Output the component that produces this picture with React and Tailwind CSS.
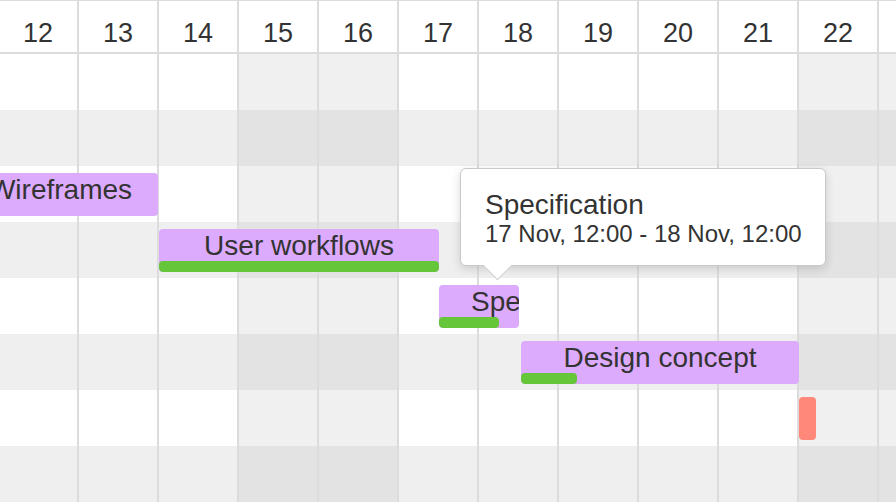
import React from 'react';

const days = [12, 13, 14, 15, 16, 17, 18, 19, 20, 21, 22, 23];
const weekend = [15, 16, 22, 23];

// bars per row, x in px from the row's left edge
const rows = [
  [],
  [],
  [{ label: 'Wireframes', left: -36, width: 195 }],
  [{ label: 'User workflows', left: 160, width: 280, progress: 280 }],
  [{ label: 'Specification', left: 440, width: 80, progress: 60, start: true }],
  [{ label: 'Design concept', left: 522, width: 278, progress: 56 }],
  [{ left: 800, width: 17, milestone: true }],
  [],
];

function Bar({ bar }) {
  if (bar.milestone) {
    return (
      <div
        className="absolute top-[7px] h-[43px] rounded-[4px] bg-[#ff887a]"
        style={{ left: bar.left, width: bar.width }}
      />
    );
  }
  return (
    <div
      className="absolute top-[7px] h-[43px] rounded-[4px] overflow-hidden bg-[#ddabfd]"
      style={{ left: bar.left, width: bar.width }}
    >
      {bar.progress && (
        <div
          className="absolute bottom-0 left-0 h-[11px] rounded-[4px] bg-[#66c63a]"
          style={{ width: bar.progress }}
        />
      )}
      <div
        className={`relative whitespace-nowrap text-[28px] leading-[32px] pt-[1px] ${
          bar.start ? 'pl-[32px]' : 'text-center'
        }`}
      >
        {bar.label}
      </div>
    </div>
  );
}

export default function App() {
  return (
    <div className="relative w-[896px] h-[504px] overflow-hidden bg-white text-[#333] font-['Liberation_Sans',Arial,sans-serif]">
      <div className="ml-[-1px] flex flex-col">
        {/* header */}
        <div className="flex h-[54px]">
          {days.map((d) => (
            <div
              key={d}
              className="w-[80px] shrink-0 border-t border-r-2 border-b-2 border-[#dcdcdc] text-center text-[27px] leading-[30px] pt-[17px]"
            >
              {d}
            </div>
          ))}
        </div>

        {rows.map((bars, i) => (
          <div key={i} className="relative flex h-[56px]">
            {days.map((d) => {
              const we = weekend.includes(d);
              const bg =
                i % 2 === 0
                  ? we
                    ? 'bg-[#f0f0f0]'
                    : 'bg-white'
                  : we
                  ? 'bg-[#e3e3e3]'
                  : 'bg-[#efefef]';
              return (
                <div
                  key={d}
                  className={`w-[80px] shrink-0 border-r-2 border-[#dcdcdc] ${bg}`}
                />
              );
            })}
            {bars.map((b, j) => (
              <Bar key={j} bar={b} />
            ))}
          </div>
        ))}
      </div>

      {/* tooltip */}
      <div className="absolute left-[460px] top-[168px] w-[366px] h-[98px] rounded-[6px] border border-[#c9c9c9] bg-white shadow-[0_3px_10px_rgba(0,0,0,0.15)] pl-[24px] pt-[21px]">
        <div className="text-[28px] leading-[30px]">Specification</div>
        <div className="text-[24px] leading-[28px] whitespace-nowrap">
          17 Nov, 12:00 - 18 Nov, 12:00
        </div>
        <div className="absolute left-[26px] top-[86px] w-[21px] h-[21px] rotate-45 bg-white border-r border-b border-[#c9c9c9]" />
      </div>
    </div>
  );
}
